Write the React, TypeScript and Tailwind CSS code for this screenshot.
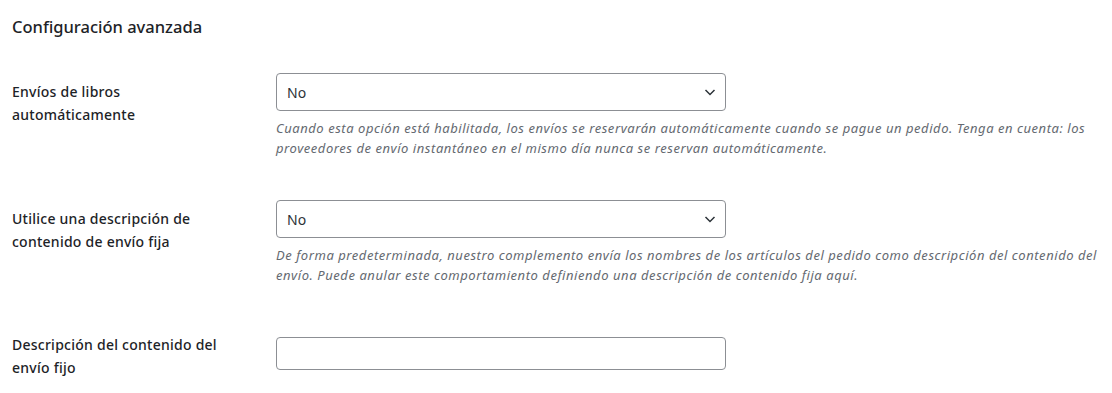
import React from "react";

const font = { fontFamily: '"Noto Sans", "Open Sans", sans-serif' };

function Chevron() {
  return (
    <svg
      viewBox="0 0 16 16"
      className="pointer-events-none absolute right-[8px] top-1/2 h-4 w-4 -translate-y-1/2"
      fill="none"
      stroke="#2c3338"
      strokeWidth={1.5}
    >
      <path d="M3.5 6l4.5 4.5L12.5 6" />
    </svg>
  );
}

function SelectNo() {
  return (
    <div className="relative w-[450px]">
      <select
        defaultValue="no"
        className="h-[38px] w-full appearance-none rounded-[4px] border border-[#8c8f94] bg-white pl-[10px] pr-6 text-[14px] text-[#2c3338] outline-none"
      >
        <option value="no">No</option>
        <option value="yes">Sí</option>
      </select>
      <Chevron />
    </div>
  );
}

export default function App() {
  return (
    <div className="min-h-[393px] bg-white px-3 pt-[15px] text-[#1d2327]" style={font}>
      <h2 className="text-[16.5px] leading-6 font-medium">Configuración avanzada</h2>

      {/* envíos automáticos */}
      <div className="mt-[34px] flex">
        <div className="w-[264px] shrink-0 pr-10 pt-[7px] text-[14px] leading-[23px] font-medium tracking-[0.25px]">
          Envíos de libros automáticamente
        </div>
        <div className="flex-1">
          <SelectNo />
          <p className="mt-[7px] text-[13px] leading-5 tracking-[0.55px] italic text-[#646970]">
            Cuando esta opción está habilitada, los envíos se reservarán automáticamente cuando se pague un pedido. Tenga en
            cuenta: los proveedores de envío instantáneo en el mismo día nunca se reservan automáticamente.
          </p>
        </div>
      </div>

      {/* descripción fija */}
      <div className="mt-[42px] flex">
        <div className="w-[264px] shrink-0 pr-10 pt-[7px] text-[14px] leading-[23px] font-medium tracking-[0.25px]">
          Utilice una descripción de contenido de envío fija
        </div>
        <div className="flex-1">
          <SelectNo />
          <p className="mt-[7px] text-[13px] leading-5 tracking-[0.55px] italic text-[#646970]">
            De forma predeterminada, nuestro complemento envía los nombres de los artículos del pedido como descripción del
            contenido del envío. Puede anular este comportamiento definiendo una descripción de contenido fija aquí.
          </p>
        </div>
      </div>

      <div className="mt-[48px] flex">
        <div className="w-[264px] shrink-0 pr-10 text-[14px] leading-[23px] font-medium tracking-[0.25px]">
          Descripción del contenido del envío fijo
        </div>
        <div className="flex-1 pt-[4px]">
          <input
            type="text"
            className="h-[33px] w-[450px] rounded-[4px] border border-[#8c8f94] bg-white px-2 text-[14px] outline-none"
          />
        </div>
      </div>
    </div>
  );
}
